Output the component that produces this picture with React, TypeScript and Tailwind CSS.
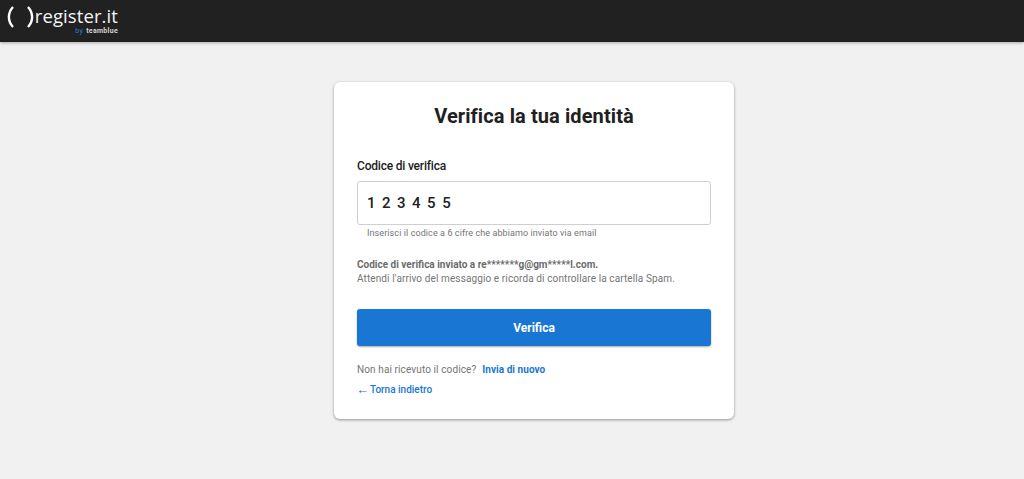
export default function App() {
  return (
    <div className="h-[479px] bg-[#f1f1f1] font-['Roboto',sans-serif] overflow-hidden">
      <header className="h-[42px] bg-[#212121] flex items-start shadow-[0_1px_3px_rgba(0,0,0,0.3)]">
        <div className="ml-[5px] flex items-start">
          <svg width="30" height="30" viewBox="0 0 30 30" className="mt-[2px]" fill="none" stroke="#fff" strokeWidth="2.4">
            <path d="M8 5C2.5 11 2.5 19 8 25" />
            <path d="M23 5C28.5 11 28.5 19 23 25" />
          </svg>
          <div className="ml-[1px] w-[82px] flex flex-col items-end">
            <span className="text-[#f4f4f4] text-[18.5px] leading-[22px] mt-[5px] tracking-[0.1px] font-['Open_Sans',sans-serif] whitespace-nowrap">register.it</span>
            <span className="text-[7px] leading-[8px] font-bold text-[#d5d5d5] tracking-[0.3px]"><span className="text-[#2f7fc9] font-normal mr-[3px]">by</span>teamblue</span>
          </div>
        </div>
      </header>
      <main className="pl-[334px] pt-[40px]">
        <div className="w-[400px] h-[337px] bg-white rounded-[6px] shadow-[0_1px_3px_rgba(0,0,0,0.4)] px-[23px] pt-[22px]">
          <h1 className="text-center text-[20px] leading-[24px] font-bold text-[#212121] tracking-[0.1px]">Verifica la tua identità</h1>
          <label className="block mt-[30px] text-[12px] leading-[16px] font-medium text-[#212121] tracking-[-0.2px]">Codice di verifica</label>
          <div className="mt-[7px] h-[44px] border border-[#cfcfcf] rounded-[3px] flex items-center pl-[9px] text-[15px] font-medium text-[#212121] tracking-[6.5px]">123455</div>
          <p className="mt-[2px] pl-[10px] text-[9px] leading-[12px] text-[#757575] tracking-[0.09px]">Inserisci il codice a 6 cifre che abbiamo inviato via email</p>
          <p className="mt-[19px] text-[10px] leading-[14px] font-bold text-[#6b6b6b]">Codice di verifica inviato a re*******g@gm*****l.com.</p>
          <p className="text-[10px] leading-[14px] text-[#757575] tracking-[0.11px]">Attendi l'arrivo del messaggio e ricorda di controllare la cartella Spam.</p>
          <button className="mt-[23px] block w-full h-[37px] bg-[#1976d2] rounded-[3px] text-white text-[12px] font-bold shadow-[0_1px_2px_rgba(0,0,0,0.35)]">Verifica</button>
          <p className="mt-[17px] text-[10px] leading-[14px] text-[#757575] tracking-[0.11px]">
            Non hai ricevuto il codice?
            <a className="ml-[6px] font-bold text-[#1976d2] tracking-[0.05px]">Invia di nuovo</a>
          </p>
          <a className="flex items-center mt-[6px] text-[10px] leading-[14px] font-medium text-[#1976d2]"><span className="text-[13px] mr-[1px] -ml-[1px]">←</span>Torna indietro</a>
        </div>
      </main>
    </div>
  );
}
